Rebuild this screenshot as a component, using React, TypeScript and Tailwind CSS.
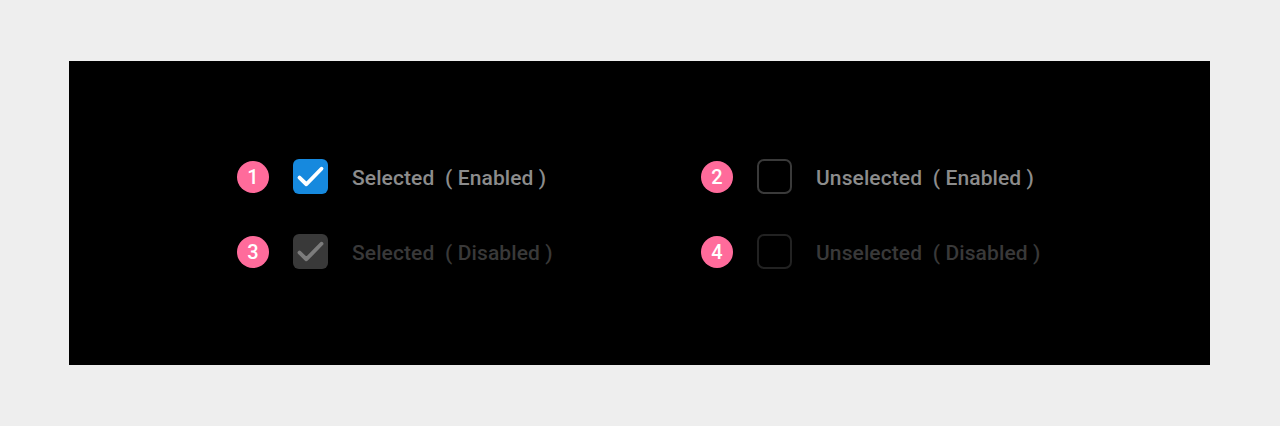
const items = [
  { n: 1, label: "Selected", state: "Enabled", checked: true, disabled: false },
  { n: 2, label: "Unselected", state: "Enabled", checked: false, disabled: false },
  { n: 3, label: "Selected", state: "Disabled", checked: true, disabled: true },
  { n: 4, label: "Unselected", state: "Disabled", checked: false, disabled: true },
];

function Box({ checked, disabled }: { checked: boolean; disabled: boolean }) {
  if (checked) {
    return (
      <div
        className={`w-[35px] h-[35px] rounded-[6px] flex items-center justify-center ${
          disabled ? "bg-[#393939]" : "bg-[#1689de]"
        }`}
      >
        <svg width="31" height="31" viewBox="0 0 24 24" fill="none">
          <path
            d="M3.5 12.8l5.3 5.2L20.5 6"
            stroke={disabled ? "#7c7c7c" : "#ffffff"}
            strokeWidth="3"
            strokeLinecap="round"
            strokeLinejoin="round"
          />
        </svg>
      </div>
    );
  }
  return (
    <div
      className={`w-[35px] h-[35px] rounded-[7px] border-2 ${
        disabled ? "border-[#222222]" : "border-[#3a3a3a]"
      }`}
    />
  );
}

export default function App() {
  return (
    <div className="min-h-[426px] bg-[#eeeeee] pt-[61px] pl-[69px] font-['Roboto',sans-serif]">
      <div className="w-[1141px] h-[304px] bg-black pl-[168px] pt-[98px]">
        <div className="grid grid-cols-[464px_464px] gap-y-[40px]">
          {items.map((it) => (
            <div key={it.n} className="flex items-center h-[35px]">
              <div className="w-8 h-8 rounded-full bg-[#ff6b9b] text-white text-[20px] font-medium flex items-center justify-center">
                {it.n}
              </div>
              <div className="ml-[24px]">
                <Box checked={it.checked} disabled={it.disabled} />
              </div>
              <span
                className={`ml-[24px] mt-[4px] text-[21px] tracking-[0.1px] font-medium whitespace-pre ${
                  it.disabled ? "text-[#393939]" : "text-[#8c8c8c]"
                }`}
              >
                {it.label}  ( {it.state} )
              </span>
            </div>
          ))}
        </div>
      </div>
    </div>
  );
}
